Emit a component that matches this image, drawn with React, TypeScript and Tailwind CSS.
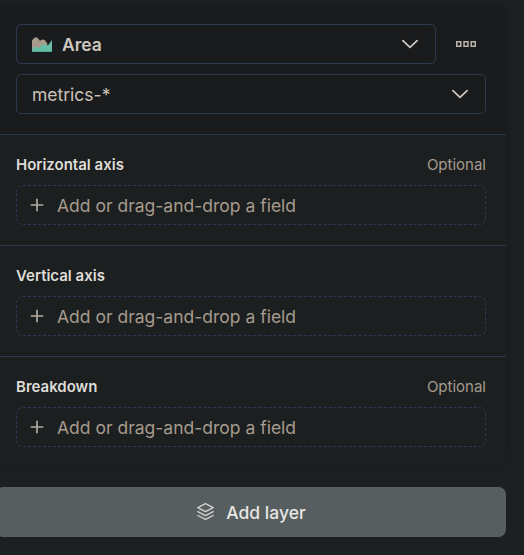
import React from "react";

function Chevron() {
  return (
    <svg width="20" height="20" viewBox="0 0 20 20" fill="none" stroke="#cec8c0" strokeWidth="1.700" strokeLinecap="round" strokeLinejoin="round">
      <path d="m2.900 6.700 7.100 6.600 7.100-6.600" />
    </svg>
  );
}

function AreaIcon() {
  return (
    <svg width="20" height="15" viewBox="0 0 20 15" className="shrink-0">
      <path fill="#a69b8d" d="M0 15V3.200L2.300 1Q4 -.5 5.600 1L8 3.700l2-1q1.700-.8 3 .6l2.300 3.200V15z" />
      <path fill="#65bda5" d="M0 15v-2.500l3-2.700q.8-.5 1.600 0l1.500 1q.9.500 1.700-.3l2.400-2.700q.8-.8 1.900-.5l2.700.9q.9.200 1.600-.5L20 3v12z" />
      <path fill="#4fa68c" d="M0 14h20v1H0z" />
    </svg>
  );
}

function Boxes() {
  return (
    <svg width="20" height="6" viewBox="0 0 20 6" fill="none" stroke="#b9b4ac" strokeWidth="1.500">
      <rect x=".75" y=".75" width="4" height="4.500" />
      <rect x="8" y=".75" width="4" height="4.500" />
      <rect x="15.250" y=".75" width="4" height="4.500" />
    </svg>
  );
}

function Layers() {
  return (
    <svg width="20" height="20" viewBox="0 0 20 20" fill="none" stroke="#d3d2cf" strokeWidth="1.400" strokeLinejoin="round" strokeLinecap="round">
      <path d="m9.500 1.700 7.700 3.900-7.700 4-7.700-4z" />
      <path d="m1.800 9.700 7.700 3.900 7.700-3.900M1.800 13.500l7.700 3.900 7.700-3.900" />
    </svg>
  );
}

function Section({ title, optional }: { title: string; optional?: boolean }) {
  return (
    <section className="h-[111px] border-t border-[#2b394f] bg-[#1c1f20] px-5 pt-5">
      <div className="flex h-5 items-center justify-between text-[15px] leading-5">
        <h3 className="font-semibold text-[#dfdcd7]">{title}</h3>
        {optional && <span className="text-[#a69b8d]">Optional</span>}
      </div>
      <button className="mt-[10px] flex h-10 w-full items-center rounded-[7px] border border-dashed border-[#2b3854] pl-[13px] text-[17.5px] text-[#a69b8d]">
        <svg width="14" height="14" viewBox="0 0 14 14" stroke="#b2a99d" strokeWidth="1.700">
          <path d="M7 .7v12.600M.7 7h12.600" />
        </svg>
        <span className="ml-[13px] pt-0.5">Add or drag-and-drop a field</span>
      </button>
    </section>
  );
}

export default function App() {
  return (
    <main className="h-[555px] w-[524px] overflow-hidden bg-[#1c2020] pt-1 font-['Inter',sans-serif]">
      <div className="-ml-1 h-[463px] w-[510px] overflow-hidden rounded-[8px] shadow-[0_2px_14px_rgba(0,0,0,0.16)]">
        <div className="h-[130px] bg-[#1a1b1d] px-5 pt-5">
          <div className="flex">
            <button className="flex h-10 w-[420px] items-center rounded-[5px] border border-[#2b394f] px-[15px] text-[17.5px] font-semibold text-[#cec8c0]">
              <AreaIcon />
              <span className="ml-[10px] pt-0.5">Area</span>
              <span className="ml-auto"><Chevron /></span>
            </button>
            <button className="flex h-10 w-[50px] items-center justify-center pl-[10px]" aria-label="Layer actions"><Boxes /></button>
          </div>
          <button className="mt-[10px] flex h-10 w-full items-center justify-between rounded-[5px] border border-[#2b394f] px-[15px] text-[17.5px] text-[#cbc3b9]">
            <span className="pt-0.5">metrics-*</span>
            <Chevron />
          </button>
        </div>
        <Section title="Horizontal axis" optional />
        <Section title="Vertical axis" />
        <Section title="Breakdown" optional />
      </div>
      <button className="mt-5 -ml-1 flex h-[50px] w-[510px] items-center justify-center gap-[10px] rounded-[7.5px] bg-[#575e60] text-[17.5px] font-medium text-[#e8e6e3]">
        <Layers />
        <span className="pt-0.5">Add layer</span>
      </button>
    </main>
  );
}
